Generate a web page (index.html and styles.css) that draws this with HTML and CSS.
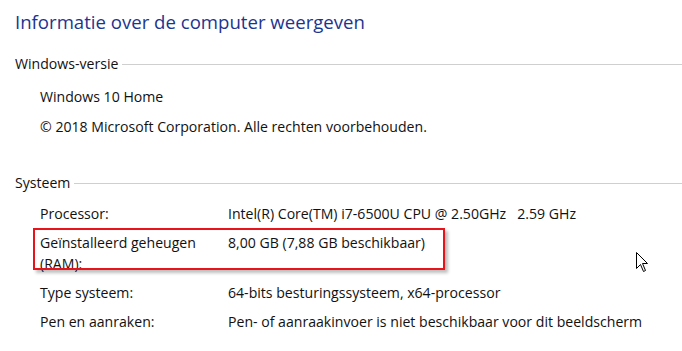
FILE: index.html
```html
<!DOCTYPE html>
<html>
<head>
<meta charset="utf-8">
<link rel="stylesheet" href="styles.css">
</head>
<body>
<div class="page">
  <h1 class="title">Informatie over de computer weergeven</h1>

  <section class="group">
    <div class="group-head"><span class="group-name">Windows-versie</span><span class="rule"></span></div>
    <div class="lines">
      <div class="line">Windows 10 Home</div>
      <div class="line">© 2018 Microsoft Corporation. Alle rechten voorbehouden.</div>
    </div>
  </section>

  <section class="group system">
    <div class="group-head"><span class="group-name">Systeem</span><span class="rule"></span></div>
    <div class="rows">
      <div class="row"><div class="label">Processor:</div><div class="value">Intel(R) Core(TM) i7-6500U CPU @ 2.50GHz&nbsp;&nbsp;&nbsp;2.59 GHz</div></div>
      <div class="row highlight"><div class="label">Geïnstalleerd geheugen (RAM):</div><div class="value">8,00 GB (7,88 GB beschikbaar)</div></div>
      <div class="row"><div class="label">Type systeem:</div><div class="value">64-bits besturingssysteem, x64-processor</div></div>
      <div class="row"><div class="label">Pen en aanraken:</div><div class="value">Pen- of aanraakinvoer is niet beschikbaar voor dit beeldscherm</div></div>
    </div>
  </section>
</div>
<svg class="cursor" width="14" height="22" viewBox="0 0 14 22">
  <path d="M1.5 1.5 L1.5 17.5 L5.5 13.5 L8.5 20.5 L10.5 19.5 L7.5 12.5 L12.5 12.5 Z" fill="#fff" stroke="#000" stroke-width="1" stroke-linejoin="miter"/>
</svg>
</body>
</html>
```
FILE: styles.css
```css
html, body {
  margin: 0;
  padding: 0;
  background: #fff;
}
body {
  font-family: "Open Sans", "Noto Sans", sans-serif;
  font-size: 14.1px;
  color: #111;
  width: 682px;
  height: 351px;
  overflow: hidden;
  position: relative;
}
.page {
  padding: 9px 0 0 15px;
}
.title {
  margin: 0;
  font-weight: normal;
  font-size: 18.6px;
  line-height: 26px;
  color: #1c3590;
}
.group {
  margin-top: 19px;
}
.group.system {
  margin-top: 25px;
}
.group-head {
  display: flex;
  align-items: center;
  height: 18px;
}
.group-name {
  white-space: nowrap;
  padding-right: 4px;
}
.rule {
  flex: 1;
  height: 1px;
  background: #cfcfcf;
  margin-top: 2px;
}
.lines {
  padding-left: 25px;
  margin-top: 16px;
}
.line {
  height: 30px;
  line-height: 18px;
}
.rows {
  margin-top: 12px;
  padding-left: 25px;
}
.row {
  display: grid;
  grid-template-columns: 188px 1fr;
  line-height: 21px;
  padding-bottom: 8px;
}
.row .label {
  width: 178px;
}
.highlight {
  position: relative;
}
.highlight::after {
  content: "";
  position: absolute;
  left: -7px;
  top: -4px;
  width: 408px;
  height: 38px;
  border: 2px solid #e8141c;
  box-shadow: 3px 3px 3px rgba(0,0,0,0.25);
  pointer-events: none;
}
.cursor {
  position: absolute;
  left: 635px;
  top: 251px;
}
```
